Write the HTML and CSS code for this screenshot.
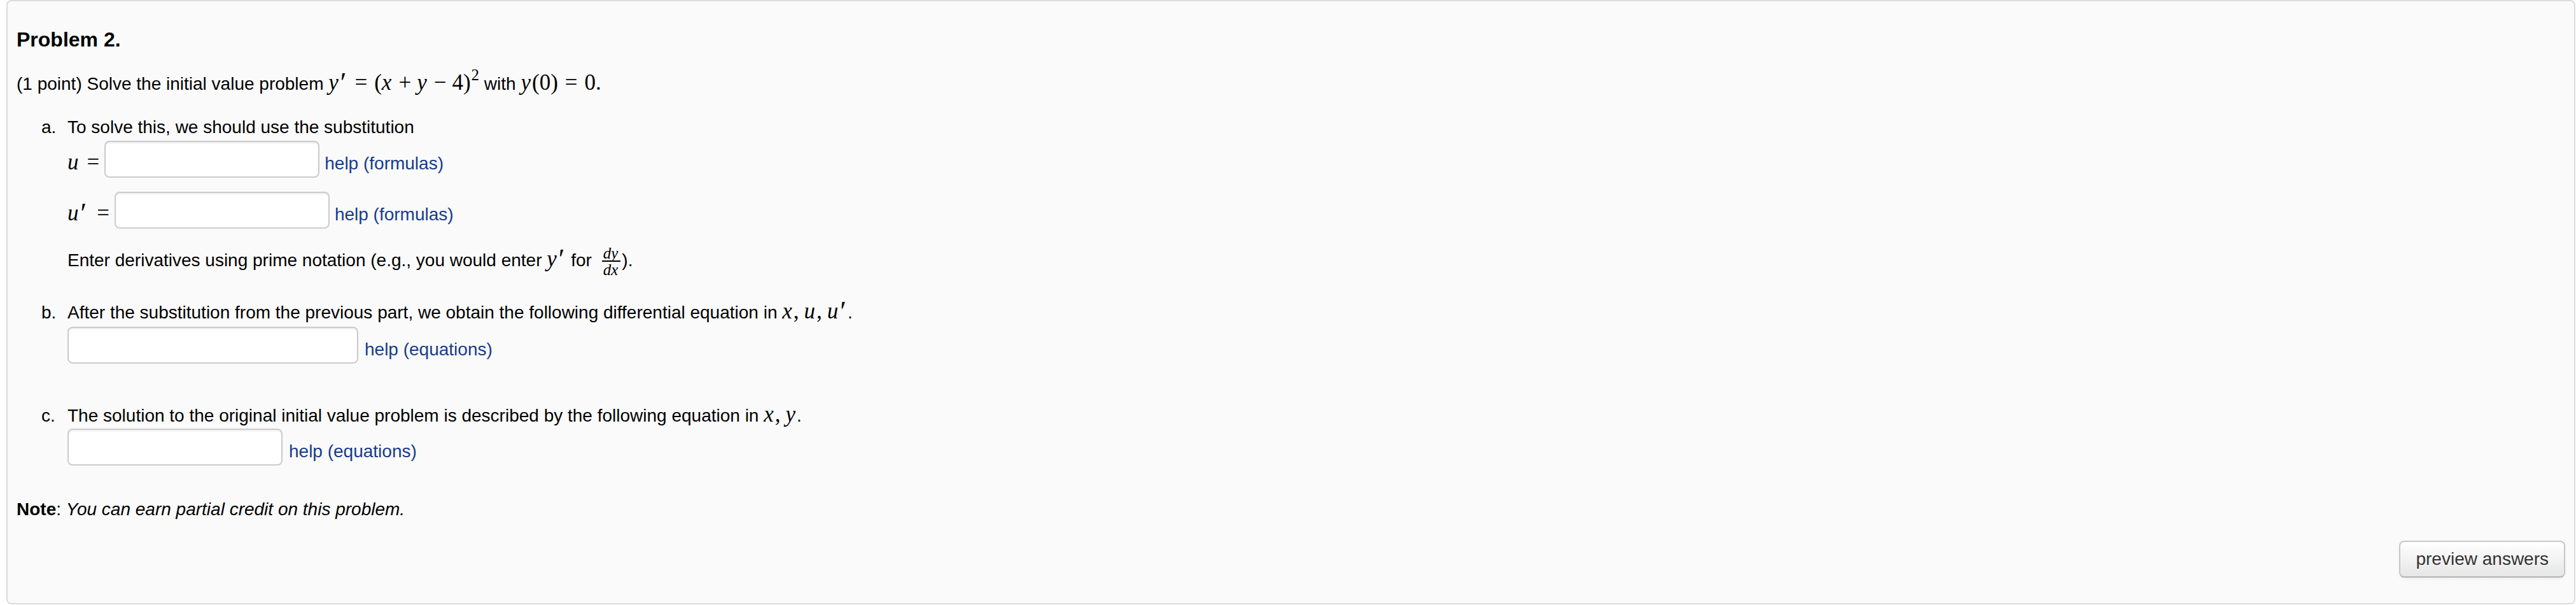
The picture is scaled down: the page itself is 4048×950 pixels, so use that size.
FILE: index.html
```html
<!DOCTYPE html>
<html lang="en">
<head>
<meta charset="utf-8">
<title>Problem 2</title>
<link rel="stylesheet" href="styles.css">
</head>
<body>
<div class="problem">
  <h2 class="title">Problem 2.</h2>
  <p class="line intro">(1 point) Solve the initial value problem <span class="m"><span class="mi">y</span><span class="pr">′</span><span class="rel">=</span>(<span class="mi">x</span><span class="bin">+</span><span class="mi">y</span><span class="bin">−</span>4)<span class="sup">2</span></span> with <span class="m"><span class="mi">y</span>(0)<span class="rel">=</span>0.</span></p>

  <ol class="parts">
    <li class="part part-a">
      <span class="marker">a.</span>
      <div class="body">
        <p class="line">To solve this, we should use the substitution</p>
        <div class="answer row-u">
          <span class="label"><span class="m"><span class="mi">u</span><span class="rel rel-l">=</span></span></span>
          <input class="field w1" type="text">
          <a class="help" href="#">help (formulas)</a>
        </div>
        <div class="answer row-up">
          <span class="label"><span class="m"><span class="mi">u</span><span class="pr pr-l">′</span><span class="rel rel-l">=</span></span></span>
          <input class="field w1" type="text">
          <a class="help" href="#">help (formulas)</a>
        </div>
        <p class="line note-a">Enter derivatives using prime notation (e.g., you would enter <span class="m"><span class="mi">y</span><span class="pr">′</span></span> for <span class="frac"><span class="num"><span class="mi">dy</span></span><span class="den"><span class="mi">dx</span></span></span>).</p>
      </div>
    </li>
    <li class="part part-b">
      <span class="marker">b.</span>
      <div class="body">
        <p class="line">After the substitution from the previous part, we obtain the following differential equation in <span class="m"><span class="mi">x</span>,<span class="sp"></span><span class="mi">u</span>,<span class="sp"></span><span class="mi">u</span><span class="pr">′</span></span>.</p>
        <div class="answer row-b">
          <input class="field w2" type="text">
          <a class="help" href="#">help (equations)</a>
        </div>
      </div>
    </li>
    <li class="part part-c">
      <span class="marker">c.</span>
      <div class="body">
        <p class="line">The solution to the original initial value problem is described by the following equation in <span class="m"><span class="mi">x</span>,<span class="sp"></span><span class="mi">y</span></span>.</p>
        <div class="answer row-c">
          <input class="field w1" type="text">
          <a class="help" href="#">help (equations)</a>
        </div>
      </div>
    </li>
  </ol>

  <p class="line credit"><b>Note</b>: <i>You can earn partial credit on this problem.</i></p>

  <div class="actions">
    <button class="btn" type="button">preview answers</button>
  </div>
</div>
</body>
</html>
```

FILE: styles.css
```css
html, body {
  margin: 0;
  padding: 0;
  background: #ffffff;
}

body {
  font-family: "Liberation Sans", Arial, Helvetica, sans-serif;
  font-size: 28px;
  color: #000;
}

.problem {
  box-sizing: border-box;
  width: 4037px;
  margin-left: 10px;
  border: 2px solid #dcdcdc;
  border-radius: 8px;
  background: #fafafa;
  padding: 0 0 40px 14px;
}

.title {
  margin: 40px 0 0;
  height: 40px;
  font-size: 32px;
  line-height: 40px;
  font-weight: bold;
}

.line {
  margin: 0;
  height: 40px;
  line-height: 40px;
  white-space: nowrap;
}

.intro {
  margin-top: 30px;
}

/* math */
.m {
  font-family: "Liberation Serif", "Times New Roman", serif;
  font-size: 35px;
  line-height: 0;
}

.mi {
  font-style: italic;
  padding-right: 2px;
}

.pr {
  font-family: "Liberation Serif", serif;
  font-size: 44px;
  margin-left: 1px;
  margin-right: 2px;
  position: relative;
  top: 3px;
}

.pr-l {
  margin-right: 5px;
}

.rel {
  margin: 0 11px;
}

.rel-l {
  margin-right: 8px;
}

.bin {
  margin: 0 9px;
}

.sup {
  font-size: 25px;
  vertical-align: 15px;
  line-height: 0;
  margin-left: 1px;
}

.sp {
  display: inline-block;
  width: 8px;
}

.frac {
  display: inline-flex;
  flex-direction: column;
  align-items: center;
  vertical-align: middle;
  font-family: "Liberation Serif", "Times New Roman", serif;
  font-size: 25px;
  line-height: 21px;
  margin: 0 2px 0 8px;
}

.num {
  padding: 0 2px 1px;
  border-bottom: 2px solid #000;
}

.den {
  padding: 2px 2px 0;
}

/* parts */
.parts {
  list-style: none;
  margin: 0;
  padding: 0 0 0 39px;
}

.part {
  display: flex;
}

.marker {
  width: 41px;
  flex: none;
  height: 40px;
  line-height: 40px;
}

.body {
  display: flex;
  flex-direction: column;
}

.part-a { margin-top: 28px; }
.part-b { margin-top: 44px; }
.part-c { margin-top: 62px; }

.answer {
  display: flex;
  align-items: flex-end;
  height: 58px;
}

.row-u  { margin-top: 1px; }
.row-up { margin-top: 22px; }
.row-b  { margin-top: 2px; }
.row-c  { margin-top: 0; }

.note-a { margin-top: 28px; }

.label {
  height: 40px;
  line-height: 40px;
  margin-bottom: 2px;
  white-space: nowrap;
}

.field {
  box-sizing: border-box;
  height: 58px;
  margin: 0;
  padding: 0 12px;
  border: 2px solid #cccccc;
  border-radius: 8px;
  background: #ffffff;
  box-shadow: inset 0 2px 2px rgba(0, 0, 0, 0.075);
  font-size: 28px;
  font-family: inherit;
}

.w1 { width: 338px; }
.w2 { width: 457px; }

.help {
  height: 40px;
  line-height: 40px;
  margin: 0 0 2px 8px;
  color: #163c8c;
  text-decoration: none;
  white-space: nowrap;
}

.row-b .help,
.row-c .help {
  margin-left: 10px;
}

.credit {
  margin-top: 49px;
}

.actions {
  display: flex;
  justify-content: flex-end;
  margin-top: 29px;
  padding-right: 14px;
}

.btn {
  box-sizing: border-box;
  height: 58px;
  padding: 0 24px;
  border: 2px solid #c8c8c8;
  border-bottom-color: #b3b3b3;
  border-radius: 8px;
  background: linear-gradient(#ffffff, #e6e6e6);
  box-shadow: inset 0 2px 0 rgba(255, 255, 255, 0.2), 0 2px 4px rgba(0, 0, 0, 0.05);
  font-family: "Liberation Sans", Arial, Helvetica, sans-serif;
  font-size: 28px;
  line-height: 54px;
  color: #333333;
}
```
